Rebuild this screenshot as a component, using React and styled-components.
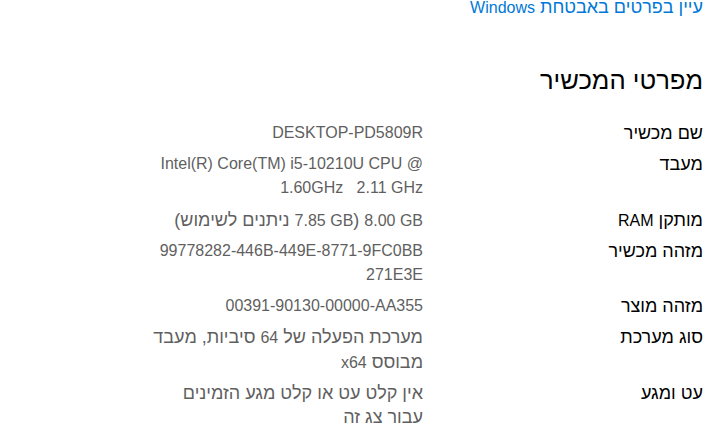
import React from 'react';
import styled, { createGlobalStyle } from 'styled-components';

const GlobalStyle = createGlobalStyle`
  html, body {
    margin: 0;
    padding: 0;
    background: #fff;
  }
  body {
    font-family: "Liberation Sans", "DejaVu Sans", sans-serif;
    overflow: hidden;
  }
`;

const Page = styled.div`
  direction: rtl;
  width: 728px;
  height: 432px;
  box-sizing: border-box;
  padding: 0 25px 0 0;
  margin-top: -5px;
`;

// Latin words and numbers sit at 16px; Hebrew runs are set larger to match Segoe's Hebrew
const Latin = styled.span`
  font-size: 16px;
  line-height: 1;
`;

const TopLink = styled.a`
  display: block;
  color: #0078d7;
  font-size: 18px;
  line-height: 24px;
  text-decoration: none;
`;

const Title = styled.h2`
  margin: 46px 0 26px;
  font-weight: 400;
  font-size: 25.6px;
  line-height: 30px;
  color: #000;
`;

const Specs = styled.dl`
  margin: 0;
  display: grid;
  grid-template-columns: 280px 271px;
  row-gap: 7px;
`;

const Label = styled.dt`
  margin: 0;
  font-size: 18px;
  line-height: 24.2px;
  color: #000;
`;

const Value = styled.dd`
  margin: 0;
  font-size: ${(p) => (p.$ltr ? '16px' : '18px')};
  line-height: 24.2px;
  color: #5f5f5f;
  text-align: right;
  direction: ${(p) => (p.$ltr ? 'ltr' : 'rtl')};
  word-break: ${(p) => (p.$breakAll ? 'break-all' : 'normal')};
`;

const specs = [
  { label: 'שם מכשיר', value: 'DESKTOP-PD5809R', ltr: true },
  {
    label: 'מעבד',
    value: 'Intel(R) Core(TM) i5-10210U CPU @ 1.60GHz\u00a0\u00a0 2.11 GHz',
    ltr: true,
  },
  {
    label: <>מותקן <Latin>RAM</Latin></>,
    value: (
      <>
        <Latin>{'\u200E8.00 GB\u200F'}</Latin> (<Latin>{'\u200E7.85 GB\u200F'}</Latin> ניתנים לשימוש)
      </>
    ),
  },
  {
    label: 'מזהה מכשיר',
    value: '99778282-446B-449E-8771-9FC0BB271E3E',
    ltr: true,
    breakAll: true,
  },
  { label: 'מזהה מוצר', value: '00391-90130-00000-AA355', ltr: true },
  {
    label: 'סוג מערכת',
    value: (
      <>
        מערכת הפעלה של <Latin>64</Latin> סיביות, מעבד מבוסס <Latin>x64</Latin>
      </>
    ),
  },
  { label: 'עט ומגע', value: 'אין קלט עט או קלט מגע הזמינים עבור צג זה' },
];

const App = () => {
  return (
    <>
      <GlobalStyle />
      <Page>
        <TopLink href="#">
          עיין בפרטים באבטחת <Latin>Windows</Latin>
        </TopLink>
        <Title>מפרטי המכשיר</Title>
        <Specs>
          {specs.map((s, i) => (
            <React.Fragment key={i}>
              <Label>{s.label}</Label>
              <Value $ltr={s.ltr} $breakAll={s.breakAll}>
                {s.value}
              </Value>
            </React.Fragment>
          ))}
        </Specs>
      </Page>
    </>
  );
};

export default App;
